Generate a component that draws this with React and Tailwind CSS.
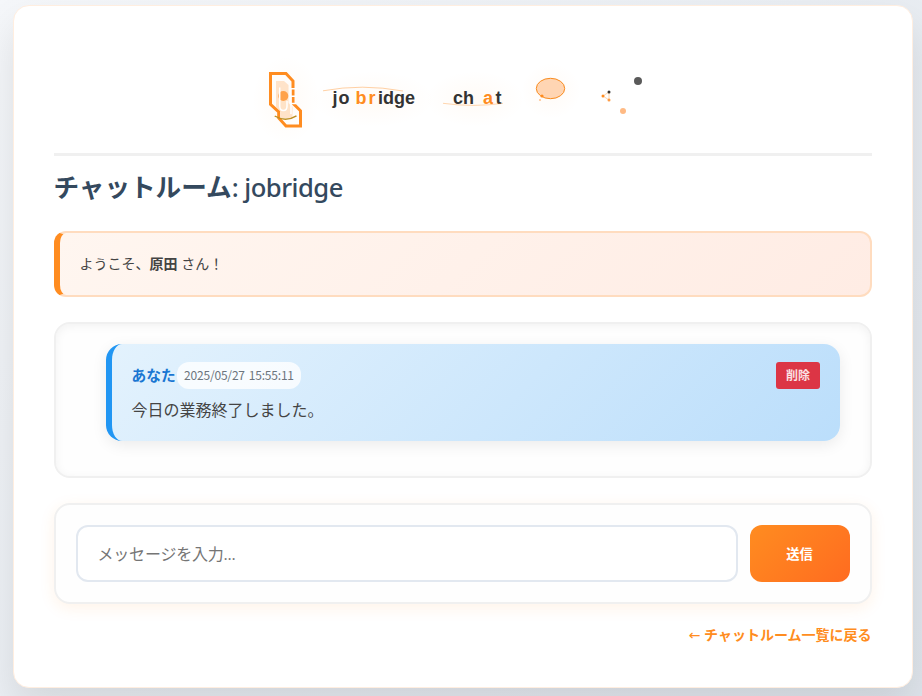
const jp = "font-['Open_Sans','Noto_Sans_CJK_JP',sans-serif]";

function Logo() {
  return (
    <svg viewBox="54 46 818 107" className="block h-[107px] w-full" role="img" aria-label="jobridge chat">
      <defs>
        <radialGradient id="halo">
          <stop offset="0" stopColor="#ff8c20" stopOpacity="0.04" />
          <stop offset="1" stopColor="#ff8c20" stopOpacity="0" />
        </radialGradient>
      </defs>
      <ellipse cx="286" cy="100" rx="34" ry="44" fill="url(#halo)" />
      <ellipse cx="373" cy="99" rx="62" ry="28" fill="url(#halo)" />
      <ellipse cx="475" cy="99" rx="50" ry="28" fill="url(#halo)" />
      <ellipse cx="551" cy="91" rx="30" ry="28" fill="url(#halo)" />

      <path d="M270.5 73.5H286L293 81V103.3L300.5 110.8V126H286L278.7 118V111.8L270.5 104.3Z" fill="none" stroke="#ff8c20" strokeWidth="3" />
      <path d="M276 81H284L288.5 85V103L292.5 107V118H281V112L276 107Z" fill="#ff8c20" fillOpacity="0.22" />
      <circle cx="283.3" cy="96" r="5" fill="#ff8c20" fillOpacity="0.75" />
      <path d="M279.7 87.5V106Q279.7 110.5 283.5 110.5Q287 110.5 287 106V101M291 97V114M291 88.7H297M291 96.3H297M290.8 88V103" fill="none" stroke="#fff" strokeWidth="1.5" />
      <path d="M290.5 103.5H296" stroke="#fff" strokeWidth="1.5" />
      <path d="M274.7 116Q285.5 122.5 296.5 115.8" fill="none" stroke="#bd8f22" strokeWidth="1.4" />

      <path d="M323 90.8Q362 83.5 403 91" fill="none" stroke="#ff8c20" strokeOpacity="0.4" />
      <g className="font-['Liberation_Sans',sans-serif] text-[18px] font-bold" fill="#333">
        <text x="332.5" y="104" textLength="17">jo</text>
        <text x="355.5" y="104" textLength="20" fill="#ff8c20">br</text>
        <text x="378" y="104" textLength="37">idge</text>
        <text x="453" y="104" textLength="21">ch</text>
        <text x="483" y="104" fill="#ff8c20">a</text>
        <text x="495.5" y="104">t</text>
      </g>
      <path d="M443 103.3Q473 107.5 503 103.3" fill="none" stroke="#ff8c20" strokeOpacity="0.35" />

      <ellipse cx="550.5" cy="88.5" rx="14.2" ry="10.2" fill="#ffd5b3" stroke="#f98b1e" />
      <circle cx="542" cy="96" r="1.6" fill="#ff8c20" />
      <circle cx="540" cy="100" r="1.1" fill="#ffc595" />

      <path d="M603 96L609 92V100Z" fill="none" stroke="#ff8c20" strokeOpacity="0.45" strokeWidth="0.8" />
      <circle cx="603" cy="96" r="1.5" fill="#ff8c20" />
      <circle cx="609" cy="92" r="1.5" fill="#333" />
      <circle cx="609" cy="100" r="1.5" fill="#ff9c45" />
      <circle cx="638" cy="81" r="4" fill="#5a5a5a" />
      <circle cx="623" cy="111" r="3" fill="#ffba84" />
    </svg>
  );
}

export default function App() {
  return (
    <div className={`${jp} h-[696px] overflow-hidden bg-linear-135 from-[#f5f7fa] to-[#dfe5ec] pt-[5px] pl-[13px] text-[#444]`}>
      <main className="h-[683px] w-[900px] rounded-2xl border border-[#ffeee0] bg-white p-10 shadow-[0_20px_40px_rgba(0,0,0,0.1)]">
        <header className="border-b-[3px] border-[#f0f0f0]">
          <Logo />
        </header>

        <h1 className="mt-[14px] h-9 text-[25.6px] leading-9 font-semibold text-[#34495e]">
          <span className="-ml-[0.5px] font-bold">チャットルーム</span>
          <span className="font-['Noto_Sans',sans-serif] font-medium tracking-[-0.5px]">: jobridge</span>
        </h1>

        <section className="mt-[25px] flex h-[66px] items-center rounded-xl border-2 border-l-[6px] border-[#ffdcbf] border-l-[#ff8c20] bg-linear-135 from-[#fff6f0] to-[#ffece4] pb-[2px] pl-[19.5px] text-[14px]">
          <p>ようこそ、<strong>原田</strong> さん！</p>
        </section>

        <section className="mt-[25px] h-[156px] rounded-2xl border-2 border-[#f0f0f0] bg-[#fefefe] pt-[19.5px] pr-[30px] pl-[50px] shadow-[inset_0_2px_10px_rgba(0,0,0,0.05)]">
          <article className="h-[97px] rounded-2xl border-l-[6px] border-[#2196f3] bg-linear-135 from-[#e3f2fd] to-[#bbdefb] pt-[18px] pr-5 pl-[19.5px] shadow-[0_4px_15px_rgba(0,0,0,0.08)]">
            <div className="flex h-[27px] items-center">
              <strong className="text-[14.7px] text-[#1976d2]">あなた</strong>
              <time className="ml-[1.4px] flex h-[27px] w-[124px] items-center justify-center rounded-xl bg-white/80 font-['Noto_Sans_CJK_JP',sans-serif] text-[12px] tracking-[-0.2px] [word-spacing:1.5px] whitespace-nowrap text-[#6c757d]">2025/05/27 15:55:11</time>
              <button className="ml-auto h-[27px] w-11 rounded-[3px] bg-[#dc3545] pt-[2px] text-[12px] font-bold text-white/85">削除</button>
            </div>
            <p className="mt-[8px] text-[16px] leading-[26px]">今日の業務終了しました。</p>
          </article>
        </section>

        <form className="mt-[25px] flex h-[101px] gap-3 rounded-2xl border-2 border-[#f0f0f0] bg-[#fefefe] p-5 shadow-[0_4px_15px_rgba(255,140,32,0.1)]">
          <input className="h-[57px] w-[662px] rounded-xl border-2 border-[#e2e8f0] bg-white pr-5 pl-[19.5px] text-[16px] tracking-[-0.2px] placeholder:text-[#757575]" placeholder="メッセージを入力..." />
          <button type="button" className="h-[57px] w-[100px] rounded-xl bg-linear-135 from-[#ff8c20] to-[#ff6b20] pt-[2px] pr-[1px] text-[13.33px] font-bold text-white">送信</button>
        </form>

        <div className="mt-[20px] pr-[0.5px] text-right text-[14px] leading-[22px] font-semibold text-[#ff8c20]">
          <a href="#"><span className="font-['DejaVu_Sans',sans-serif] text-[14px] font-normal">←</span> チャットルーム一覧に戻る</a>
        </div>
      </main>
    </div>
  );
}
